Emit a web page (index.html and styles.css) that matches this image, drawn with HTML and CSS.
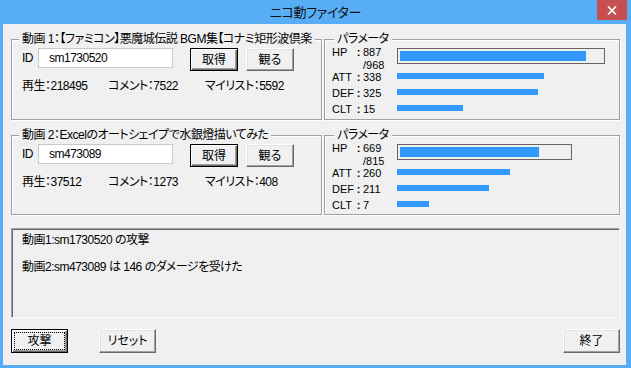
FILE: index.html
```html
<!DOCTYPE html>
<html lang="ja">
<head>
<meta charset="utf-8">
<title>ニコ動ファイター</title>
<link rel="stylesheet" href="styles.css">
</head>
<body>
<div class="window">
  <div class="titlebar">
    <div class="title">ニコ動ファイター</div>
    <div class="close">
      <svg width="10" height="9" viewBox="0 0 10 9"><path d="M1 0.5 L9 8.5 M9 0.5 L1 8.5" stroke="#fff" stroke-width="1.7" fill="none"/></svg>
    </div>
  </div>
  <div class="client">
    <div class="group-row">
      <div class="group video">
        <div class="caption">動画 1：【ファミコン】悪魔城伝説 BGM集【コナミ矩形波倶楽</div>
        <div class="id-row">
          <span class="id-label">ID</span>
          <div class="textbox">sm1730520</div>
          <button class="btn default">取得</button>
          <button class="btn">観る</button>
        </div>
        <div class="stats"><span class="s1">再生：218495</span><span class="s2">コメント：7522</span><span>マイリスト：5592</span></div>
      </div>
      <div class="group params">
        <div class="caption pcap">パラメータ</div>
        <div class="pbody">
          <div class="prow hp">
            <span class="plabel">HP</span><span class="pcolon">:</span><span class="pval">887<br>/968</span>
            <div class="hpbox" style="width:208px"><div class="hpfill" style="width:186px"></div></div>
          </div>
          <div class="prow att"><span class="plabel">ATT</span><span class="pcolon">:</span><span class="pval">338</span><div class="bar" style="width:147px"></div></div>
          <div class="prow"><span class="plabel">DEF</span><span class="pcolon">:</span><span class="pval">325</span><div class="bar" style="width:141px"></div></div>
          <div class="prow"><span class="plabel">CLT</span><span class="pcolon">:</span><span class="pval">15</span><div class="bar" style="width:66px"></div></div>
        </div>
      </div>
    </div>
    <div class="group-row second">
      <div class="group video">
        <div class="caption">動画 2：Excelのオートシェイプで水銀燈描いてみた</div>
        <div class="id-row">
          <span class="id-label">ID</span>
          <div class="textbox">sm473089</div>
          <button class="btn default">取得</button>
          <button class="btn">観る</button>
        </div>
        <div class="stats"><span class="s1">再生：37512</span><span class="s2">コメント：1273</span><span>マイリスト：408</span></div>
      </div>
      <div class="group params">
        <div class="caption pcap">パラメータ</div>
        <div class="pbody">
          <div class="prow hp">
            <span class="plabel">HP</span><span class="pcolon">:</span><span class="pval">669<br>/815</span>
            <div class="hpbox" style="width:175px"><div class="hpfill" style="width:139px"></div></div>
          </div>
          <div class="prow att"><span class="plabel">ATT</span><span class="pcolon">:</span><span class="pval">260</span><div class="bar" style="width:113px"></div></div>
          <div class="prow"><span class="plabel">DEF</span><span class="pcolon">:</span><span class="pval">211</span><div class="bar" style="width:92px"></div></div>
          <div class="prow"><span class="plabel">CLT</span><span class="pcolon">:</span><span class="pval">7</span><div class="bar" style="width:32px"></div></div>
        </div>
      </div>
    </div>
    <div class="log">
      <div class="log-line">動画1:sm1730520 の攻撃</div>
      <div class="log-line">動画2:sm473089 は 146 のダメージを受けた</div>
    </div>
    <div class="actions">
      <button class="btn big default focus">攻撃</button>
      <button class="btn big reset">リセット</button>
      <button class="btn big quit">終了</button>
    </div>
  </div>
</div>
</body>
</html>
```

FILE: styles.css
```css
html, body {
  margin: 0;
  padding: 0;
  background: #ffffff;
}

body {
  font-family: "Noto Sans CJK JP", "Noto Sans", sans-serif;
  color: #000;
}

.window {
  width: 631px;
  height: 368px;
  background: #57aef7;
  display: flex;
  flex-direction: column;
}

.titlebar {
  flex: none;
  height: 24px;
  display: grid;
  grid-template-columns: 1fr auto 1fr;
  align-items: start;
}

.title {
  grid-column: 2;
  font-size: 13px;
  line-height: 24px;
  color: #111;
  letter-spacing: -0.3px;
  font-feature-settings: "palt" 1;
}

.close {
  grid-column: 3;
  justify-self: end;
  width: 30px;
  height: 20px;
  margin-right: 4px;
  background: #c75050;
  display: flex;
  align-items: center;
  justify-content: center;
}

.client {
  flex: 1;
  margin: 0 5px 3px 3px;
  background: #f0f0f0;
  padding: 15px 6px 0 8px;
  font-family: "Liberation Sans", "Noto Sans CJK JP", sans-serif;
  font-size: 12px;
  line-height: 14px;
  letter-spacing: -0.5px;
  font-feature-settings: "palt" 1;
}

.group-row {
  display: flex;
  gap: 2px;
  height: 81px;
}

.group-row.second {
  margin-top: 15px;
  height: 80px;
}

.group {
  box-sizing: border-box;
  border: 1px solid #a0a0a0;
  box-shadow: inset 1px 1px 0 #fff, 1px 1px 0 #fff;
}

.video {
  width: 311px;
}

.params {
  flex: 1;
}

.caption {
  width: fit-content;
  line-height: 14px;
  margin: -8px 0 0 7px;
  padding: 0 3px;
  background: #f0f0f0;
  white-space: nowrap;
}

.caption.pcap {
  margin-left: 9px;
}

.id-row {
  display: flex;
  align-items: flex-start;
  margin-top: 2px;
  padding-left: 10px;
  height: 23px;
}

.id-label {
  width: 16px;
  line-height: 20px;
}

.textbox {
  box-sizing: border-box;
  width: 135px;
  height: 20px;
  border: 1px solid #c9c9c9;
  background: #fff;
  padding-left: 10px;
  line-height: 18px;
}

.btn {
  box-sizing: border-box;
  width: 48px;
  height: 23px;
  margin: 0 0 0 8px;
  padding: 0;
  font: inherit;
  font-size: 12px;
  letter-spacing: 0;
  color: #000;
  background: #f0f0f0;
  border: 1px solid;
  border-color: #fff #696969 #696969 #fff;
  box-shadow: inset -1px -1px 0 #a0a0a0, inset 1px 1px 0 #e3e3e3;
}

.textbox + .btn {
  margin-left: 17px;
}

.btn.default {
  border: 1px solid #000;
  box-shadow: inset 1px 1px 0 #fff, inset -1px -1px 0 #696969, inset -2px -2px 0 #a0a0a0;
}

.btn.focus {
  outline: 1px dotted #000;
  outline-offset: -4px;
}

.stats {
  display: flex;
  margin-top: 8px;
  padding-left: 10px;
}

.s1 {
  width: 86px;
}

.s2 {
  width: 97px;
}

.pbody {
  padding-left: 7px;
  font-size: 11px;
  letter-spacing: 0;
}

.prow {
  display: flex;
  align-items: flex-start;
  height: 13px;
  line-height: 13px;
  margin-top: 3px;
}

.prow.hp {
  height: 25px;
  line-height: 12.5px;
  margin-top: 0;
}

.prow.att {
  margin-top: 0;
}

.plabel {
  width: 22px;
}

.pcolon {
  width: 9px;
  text-align: center;
  font-weight: bold;
}

.pval {
  width: 34px;
}

.hpbox {
  box-sizing: border-box;
  margin-top: 2px;
  height: 16px;
  border: 1px solid #646464;
  padding: 2px;
}

.hpfill {
  height: 10px;
  background: #3399ff;
}

.bar {
  margin-top: 2px;
  height: 6px;
  background: #3399ff;
}

.log {
  box-sizing: border-box;
  margin-top: 13px;
  height: 90px;
  border: 1px solid;
  border-color: #a0a0a0 #fff #fff #a0a0a0;
  box-shadow: inset 1px 1px 0 #696969, inset -1px -1px 0 #e3e3e3;
  padding: 4px 10px;
}

.log-line + .log-line {
  margin-top: 13px;
}

.actions {
  display: flex;
  margin-top: 11px;
}

.btn.big {
  width: 57px;
  height: 24px;
  margin-left: 0;
}

.btn.reset {
  margin-left: 31px;
}

.btn.quit {
  margin-left: auto;
}
```
